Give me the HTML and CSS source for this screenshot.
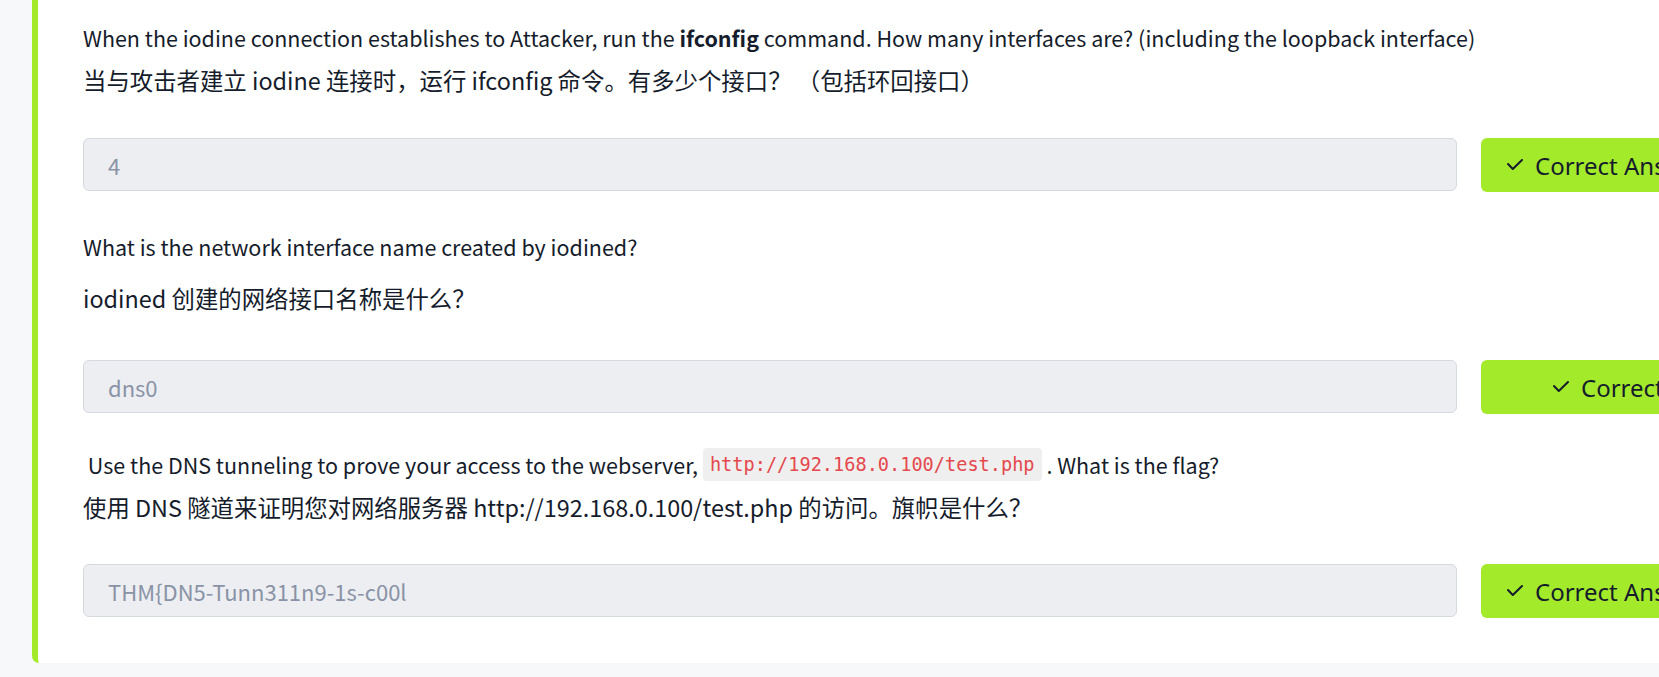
FILE: index.html
```html
<!DOCTYPE html>
<html lang="zh-CN">
<head>
<meta charset="utf-8">
<title>Questions</title>
<link rel="stylesheet" href="styles.css">
</head>
<body>
<main class="card">
  <section class="qa">
    <div class="q">
      <p class="en">When the iodine connection establishes to Attacker, run the <strong>ifconfig</strong> command. How many interfaces are? (including the loopback interface)</p>
      <p class="cn">当与攻击者建立 iodine 连接时，运行 ifconfig 命令。有多少个接口？ （包括环回接口）</p>
    </div>
    <div class="answer">
      <div class="field">4</div>
      <button class="btn">
        <svg class="tick" width="16" height="12" viewBox="0 0 16 12"><polyline points="1,5 5.8,10 15,1" fill="none" stroke="#151c2b" stroke-width="2" stroke-linecap="round" stroke-linejoin="round"/></svg>
        <span>Correct Answer</span>
      </button>
    </div>
  </section>

  <section class="qa qa-split">
    <div class="q">
      <p class="en">What is the network interface name created by iodined?</p>
      <p class="cn cn-spaced">iodined 创建的网络接口名称是什么？</p>
    </div>
    <div class="answer answer-wide">
      <div class="field">dns0</div>
      <button class="btn btn-centered">
        <svg class="tick" width="16" height="12" viewBox="0 0 16 12"><polyline points="1,5 5.8,10 15,1" fill="none" stroke="#151c2b" stroke-width="2" stroke-linecap="round" stroke-linejoin="round"/></svg>
        <span>Correct Answer</span>
      </button>
    </div>
  </section>

  <section class="qa qa-code">
    <div class="q">
      <p class="en">&nbsp;Use the DNS tunneling to prove your access to the webserver, <code class="code">http://192.168.0.100/test.php</code> . What is the flag?</p>
      <p class="cn">使用 DNS 隧道来证明您对网络服务器 http://192.168.0.100/test.php 的访问。旗帜是什么？</p>
    </div>
    <div class="answer answer-tight">
      <div class="field">THM{DN5-Tunn311n9-1s-c00l</div>
      <button class="btn">
        <svg class="tick" width="16" height="12" viewBox="0 0 16 12"><polyline points="1,5 5.8,10 15,1" fill="none" stroke="#151c2b" stroke-width="2" stroke-linecap="round" stroke-linejoin="round"/></svg>
        <span>Correct Answer</span>
      </button>
    </div>
  </section>
</main>
</body>
</html>
```

FILE: styles.css
```css
html, body {
  margin: 0;
  padding: 0;
}

body {
  background: #f7f8fa;
  overflow: hidden;
  font-family: "Noto Sans CJK SC", "Noto Sans", sans-serif;
  color: #151c2b;
}

.card {
  margin-left: 32px;
  background: #ffffff;
  border-left: 6px solid #a3ea2a;
  border-bottom-left-radius: 7px;
  padding: 16px 0 45px 45px;
}

.qa + .qa {
  margin-top: 33px;
}

.qa.qa-code {
  margin-top: 29px;
}

.q p {
  margin: 0;
  line-height: 43px;
}

.en {
  font-size: 21.5px;
}

.cn {
  font-size: 23.4px;
}

.cn-spaced {
  margin-top: 9px !important;
}

.en strong {
  font-weight: 700;
}

.code {
  display: inline-block;
  vertical-align: middle;
  height: 33px;
  line-height: 33px;
  padding: 0 7px;
  margin-top: -8px;
  border-radius: 4px;
  background: #efefef;
  color: #e5484d;
  font-family: "DejaVu Sans Mono", "Liberation Mono", monospace;
  font-size: 18.6px;
}

.answer {
  display: flex;
  gap: 24px;
  margin-top: 36px;
}

.answer-wide {
  margin-top: 40px;
}

.answer-tight {
  margin-top: 35px;
}

.field {
  flex: none;
  box-sizing: border-box;
  width: 1374px;
  height: 53px;
  padding-left: 24px;
  display: flex;
  align-items: center;
  background: #eceef2;
  border: 1px solid #d5d9e0;
  border-radius: 6px;
  color: #8a93a6;
  font-size: 22px;
}

.btn {
  flex: none;
  display: flex;
  align-items: center;
  gap: 12px;
  box-sizing: border-box;
  width: 340px;
  height: 54px;
  padding: 0 0 0 26px;
  border: none;
  border-radius: 6px;
  background: #a3ea2a;
  color: #151c2b;
  font-family: "Noto Sans", "Open Sans", sans-serif;
  font-size: 24px;
  cursor: pointer;
}

.btn-centered {
  padding-left: 72px;
}

.tick {
  flex: none;
}
```
